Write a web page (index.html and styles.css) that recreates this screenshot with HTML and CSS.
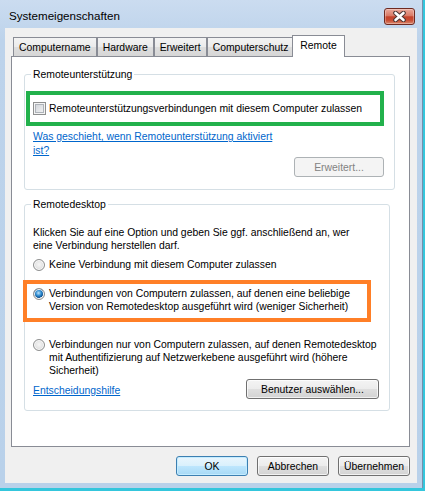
FILE: index.html
```html
<!DOCTYPE html>
<html>
<head>
    <title>Systemeigenschaften</title>
    <meta charset="utf-8">
    <link rel="stylesheet" href="styles.css">
</head>
<body>
    <div class="window">
        <div class="titlebar">
            <span class="title">Systemeigenschaften</span>
            <div class="close-btn">
                <svg width="15" height="11" viewBox="0 0 15 11">
                    <path d="M3.5 2 L11.5 9 M11.5 2 L3.5 9" stroke="#4a3634" stroke-width="4.6" stroke-linecap="round"/>
                    <path d="M3.5 2 L11.5 9 M11.5 2 L3.5 9" stroke="#ffffff" stroke-width="2.6" stroke-linecap="round"/>
                </svg>
            </div>
        </div>
        <div class="client">
            <div class="tabs">
                <div class="tab">Computername</div>
                <div class="tab">Hardware</div>
                <div class="tab">Erweitert</div>
                <div class="tab">Computerschutz</div>
                <div class="tab active">Remote</div>
            </div>
            <div class="panel">
                <fieldset class="group">
                    <legend>Remoteunterstützung</legend>
                    <label class="check-row mark-green">
                        <span class="checkbox"></span>
                        <span>Remoteunterstützungsverbindungen mit diesem Computer zulassen</span>
                    </label>
                    <a class="link help-link" href="#">Was geschieht, wenn Remoteunterstützung aktiviert<br>ist?</a>
                    <div class="btn-row">
                        <button class="btn btn-advanced" disabled>Erweitert...</button>
                    </div>
                </fieldset>
                <fieldset class="group group-desktop">
                    <legend>Remotedesktop</legend>
                    <p class="hint">Klicken Sie auf eine Option und geben Sie ggf. anschließend an, wer<br>eine Verbindung herstellen darf.</p>
                    <div class="radio-row first">
                        <span class="radio"></span>
                        <span>Keine Verbindung mit diesem Computer zulassen</span>
                    </div>
                    <div class="radio-row mark-orange">
                        <span class="radio checked"></span>
                        <span>Verbindungen von Computern zulassen, auf denen eine beliebige<br>Version von Remotedesktop ausgeführt wird (weniger Sicherheit)</span>
                    </div>
                    <div class="radio-row last">
                        <span class="radio"></span>
                        <span>Verbindungen nur von Computern zulassen, auf denen Remotedesktop<br>mit Authentifizierung auf Netzwerkebene ausgeführt wird (höhere<br>Sicherheit)</span>
                    </div>
                    <div class="btn-row split">
                        <a class="link" href="#">Entscheidungshilfe</a>
                        <button class="btn btn-users">Benutzer auswählen...</button>
                    </div>
                </fieldset>
            </div>
            <div class="dialog-buttons">
                <button class="btn default">OK</button>
                <button class="btn">Abbrechen</button>
                <button class="btn">Übernehmen</button>
            </div>
        </div>
    </div>
</body>
</html>
```

FILE: styles.css
```css
body {
    margin: 0;
    background: #34c6dc;
    font-family: "Liberation Sans", Arial, sans-serif;
    font-size: 10.4px;
    line-height: 13px;
    color: #000;
}
.window {
    width: 423px;
    height: 488px;
    box-sizing: border-box;
    padding: 0 5px 5px 5px;
    background: linear-gradient(#cbdcf0, #bdd3eb 40px, #b9d1ea);
    border-right: 1px solid #7590ad;
    display: flex;
    flex-direction: column;
}
.titlebar {
    height: 28px;
    flex: none;
    display: flex;
    justify-content: space-between;
    align-items: flex-start;
}
.title {
    padding: 9px 0 0 4px;
    font-size: 11.6px;
    line-height: 14px;
}
.close-btn {
    margin: 8px 2px 0 0;
    width: 31px;
    height: 17px;
    box-sizing: border-box;
    border: 1px solid #6e2a21;
    border-radius: 3px;
    background: linear-gradient(#eaa99b, #d97a66 45%, #c4432c 52%, #c84c32 75%, #da8a70);
    box-shadow: inset 0 0 0 1px rgba(255, 255, 255, 0.3);
    display: flex;
    align-items: center;
    justify-content: center;
}
.client {
    flex: 1;
    background: #f0f0f0;
    padding: 7px 7px 0 6px;
    display: flex;
    flex-direction: column;
}
.tabs {
    display: flex;
    align-items: flex-end;
    height: 22px;
    padding-left: 2px;
    margin-bottom: -1px;
    position: relative;
    z-index: 1;
}
.tab {
    height: 19px;
    box-sizing: border-box;
    margin-bottom: 1px;
    padding: 0 5px;
    border: 1px solid #898c95;
    border-bottom: none;
    background: linear-gradient(#f3f3f3, #ebebeb 50%, #dedede 50%, #d6d6d6);
    display: flex;
    align-items: center;
    white-space: nowrap;
}
.tab.active {
    height: 22px;
    margin: 0 -2px;
    padding: 0 7px 2px;
    background: #fff;
    position: relative;
    z-index: 2;
}
.panel {
    width: 399px;
    height: 391px;
    box-sizing: border-box;
    border: 1px solid #898c95;
    background: #fff;
    padding: 11px 0 0 12px;
}
.group {
    margin: 0;
    width: 366px;
    box-sizing: border-box;
    border: 1px solid #d5dfe5;
    border-radius: 3px;
    padding: 0 10px 12px 8px;
}
.group legend {
    padding: 0 2px;
    margin-left: -2px;
    line-height: 13px;
}
.group-desktop {
    margin-top: 8px;
    padding-bottom: 11px;
}
.mark-green {
    margin: 10px 0 0 -7px;
    width: 358px;
    box-sizing: border-box;
    border: 4px solid #22b14c;
    padding: 7px 0 7px 3px;
    display: flex;
    align-items: center;
    white-space: nowrap;
}
.checkbox {
    flex: none;
    width: 13px;
    height: 13px;
    box-sizing: border-box;
    margin-right: 3px;
    border: 1px solid #8e8f8f;
    background: linear-gradient(135deg, #cbcfd5, #f7f7f7);
    box-shadow: inset 0 0 0 1px #f4f4f4, inset 0 0 0 2px #aeb3b9;
}
.link {
    color: #0066cc;
    text-decoration: underline;
}
.help-link {
    display: block;
    margin-top: 4px;
    line-height: 14px;
}
.btn-row {
    display: flex;
    justify-content: flex-end;
    margin-top: -1px;
}
.btn-row.split {
    justify-content: space-between;
    align-items: flex-end;
    margin-top: 2px;
}
.btn-row.split .link {
    line-height: 14px;
    margin-bottom: 1px;
}
.hint {
    margin: 15px 0 0;
    white-space: nowrap;
}
.radio-row {
    display: flex;
    align-items: flex-start;
    white-space: nowrap;
}
.radio-row.first {
    margin-top: 6px;
}
.radio-row.last {
    margin-top: 16px;
}
.mark-orange {
    margin: 9px 0 0 -10px;
    width: 348px;
    box-sizing: border-box;
    border: 4px solid #ff7f27;
    padding: 3px 0 5px 6px;
}
.radio {
    flex: none;
    width: 12px;
    height: 12px;
    box-sizing: border-box;
    margin: 1px 4px 0 0;
    border: 1px solid #8e8f8f;
    border-radius: 50%;
    background: radial-gradient(circle at 50% 45%, #f6f6f6 0, #e3e3e3 55%, #cfcfcf 100%);
    box-shadow: inset 0 0 0 1px #fbfbfb;
}
.radio.checked {
    background: radial-gradient(circle at 45% 40%, #bfe3fa 0, #2b8ad0 35%, #0f4f8c 58%, #e8e8e8 62%, #d6d6d6 100%);
}
.btn {
    font: inherit;
    color: #000;
    height: 20px;
    padding: 0;
    border: 1px solid #707070;
    border-radius: 3px;
    background: linear-gradient(#f4f4f4, #ececec 50%, #dfdfdf 50%, #d3d3d3);
    box-shadow: inset 0 0 0 1px rgba(255, 255, 255, 0.7);
}
.btn.default {
    border-color: #3c7fb1;
    background: linear-gradient(#eaf6fd, #d9f0fc 50%, #bee6fd 50%, #a7d9f5);
    box-shadow: inset 0 0 0 1px #c4ecff;
}
.btn:disabled {
    border-color: #adb2b5;
    background: #f4f4f4;
    color: #838383;
    box-shadow: none;
}
.btn-advanced {
    width: 90px;
}
.btn-users {
    width: 133px;
}
.dialog-buttons {
    display: flex;
    justify-content: flex-end;
    gap: 9px;
    margin-top: 9px;
}
.dialog-buttons .btn {
    width: 72px;
}
```
